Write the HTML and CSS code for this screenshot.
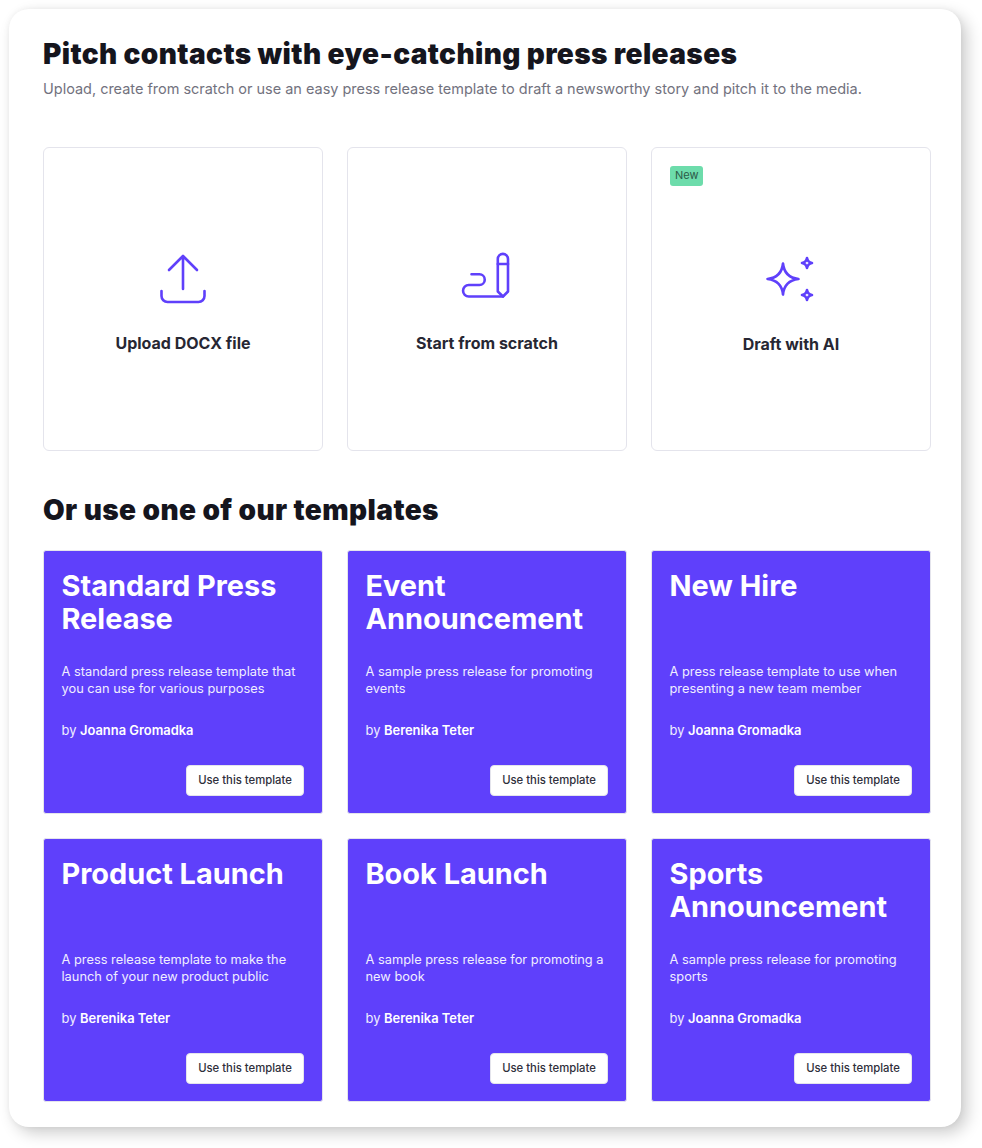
FILE: index.html
```html
<!DOCTYPE html>
<html lang="en">
<head>
<meta charset="utf-8">
<title>Press releases</title>
<link rel="stylesheet" href="styles.css">
</head>
<body>
<main class="panel">
  <header class="head">
    <h1 class="title">Pitch contacts with eye-catching press releases</h1>
    <p class="sub">Upload, create from scratch or use an easy press release template to draft a newsworthy story and pitch it to the media.</p>
  </header>
  <section class="grid starts">
    <a class="start">
      <svg class="icon" width="48" height="50" viewBox="0 0 48 50" fill="none" stroke="#5f40fb" stroke-width="2.6" stroke-linecap="round" stroke-linejoin="round"><path d="M24 2V35M10 16 24 2 38 16"/><path d="M2.500 37V42A6 6 0 0 0 8.500 48H39.500A6 6 0 0 0 45.500 42V37"/></svg>
      <span class="start-label">Upload DOCX file</span>
    </a>
    <a class="start">
      <svg class="icon" width="50" height="50" viewBox="0 0 50 50" fill="none" stroke="#5f40fb" stroke-width="2.6" stroke-linecap="round" stroke-linejoin="round"><path d="M35.800 5A5.100 5.100 0 0 1 46 5V37.500L41 42.500 35.800 37.500Z"/><path d="M35.800 10H46"/><path d="M41 42.500H6.800A5.750 5.750 0 0 1 6.800 31H17.400A5.350 5.350 0 0 0 17.400 20.300H9.500"/></svg>
      <span class="start-label">Start from scratch</span>
    </a>
    <a class="start">
      <span class="badge">New</span>
      <svg class="icon" width="50" height="51" viewBox="0 0 50 51" fill="none" stroke="#5f40fb" stroke-width="2.6" stroke-linejoin="round" stroke-linecap="round"><path d="M17 9.500C18 19 23 24 32.500 25 23 26 18 31 17 40.500 16 31 11 26 1.500 25 11 24 16 19 17 9.500Z"/><path d="M41 4C41.500 7 43 8.500 46 9 43 9.500 41.500 11 41 14 40.500 11 39 9.500 36 9 39 8.500 40.500 7 41 4Z"/><path d="M41 36C41.500 39 43 40.500 46 41 43 41.500 41.500 43 41 46 40.500 43 39 41.500 36 41 39 40.500 40.500 39 41 36Z"/></svg>
      <span class="start-label">Draft with AI</span>
    </a>
  </section>
  <h2 class="section-title">Or use one of our templates</h2>
  <section class="grid templates">
    <article class="tpl">
      <h3 class="tpl-title">Standard Press Release</h3>
      <p class="tpl-desc">A standard press release template that you can use for various purposes</p>
      <p class="tpl-by">by <b>Joanna Gromadka</b></p>
      <button class="tpl-btn">Use this template</button>
    </article>
    <article class="tpl">
      <h3 class="tpl-title">Event Announcement</h3>
      <p class="tpl-desc">A sample press release for promoting events</p>
      <p class="tpl-by">by <b>Berenika Teter</b></p>
      <button class="tpl-btn">Use this template</button>
    </article>
    <article class="tpl">
      <h3 class="tpl-title">New Hire</h3>
      <p class="tpl-desc">A press release template to use when presenting a new team member</p>
      <p class="tpl-by">by <b>Joanna Gromadka</b></p>
      <button class="tpl-btn">Use this template</button>
    </article>
    <article class="tpl">
      <h3 class="tpl-title">Product Launch</h3>
      <p class="tpl-desc">A press release template to make the launch of your new product public</p>
      <p class="tpl-by">by <b>Berenika Teter</b></p>
      <button class="tpl-btn">Use this template</button>
    </article>
    <article class="tpl">
      <h3 class="tpl-title">Book Launch</h3>
      <p class="tpl-desc">A sample press release for promoting a new book</p>
      <p class="tpl-by">by <b>Berenika Teter</b></p>
      <button class="tpl-btn">Use this template</button>
    </article>
    <article class="tpl">
      <h3 class="tpl-title">Sports Announcement</h3>
      <p class="tpl-desc">A sample press release for promoting sports</p>
      <p class="tpl-by">by <b>Joanna Gromadka</b></p>
      <button class="tpl-btn">Use this template</button>
    </article>
  </section>
</main>
</body>
</html>
```
FILE: styles.css
```css
* { box-sizing: border-box; }
html, body { margin: 0; padding: 0; background: #fff; }
body {
  width: 982px;
  height: 1148px;
  overflow: hidden;
  padding: 9px 0 0 9px;
  font-family: Inter, "Liberation Sans", sans-serif;
  color: #17171f;
}
.panel {
  width: 952px;
  height: 1118px;
  background: #fff;
  border-radius: 20px;
  padding: 27px 30px 0 34px;
  box-shadow: 6px 6px 16px rgba(0, 0, 0, 0.2), 0 0 6px rgba(0, 0, 0, 0.05);
}
.head { height: 111px; }
.title {
  margin: 0;
  font-size: 28px;
  line-height: 36px;
  font-weight: 900;
  letter-spacing: 0.39px;
  color: #15151d;
}
.sub {
  margin: 7px 0 0;
  font-size: 14.5px;
  line-height: 20px;
  letter-spacing: -0.017px;
  color: #72727e;
}
.grid {
  display: grid;
  grid-template-columns: repeat(3, 280px);
  gap: 24px;
}
.start {
  position: relative;
  height: 304px;
  border: 1px solid #e4e4ec;
  border-radius: 6px;
  display: flex;
  flex-direction: column;
  align-items: center;
  padding-top: 106px;
}
.icon { display: block; flex: none; overflow: visible; }
.start-label {
  margin-top: 28px;
  font-size: 16px;
  line-height: 22px;
  font-weight: 650;
  color: #272733;
}
.badge {
  position: absolute;
  left: 18px;
  top: 18px;
  padding: 0 4.5px 0 5px;
  height: 20px;
  border-radius: 3px;
  background: #6ddcab;
  font-size: 11px;
  line-height: 19px;
  color: #2c5a48;
}
.section-title {
  margin: 41px 0 22px;
  font-size: 28px;
  line-height: 36px;
  font-weight: 900;
  letter-spacing: 0.41px;
  color: #15151d;
}
.tpl {
  height: 264px;
  background: #5f40fb;
  border: 1px solid #e4e4ec;
  border-radius: 3px;
  padding: 18px 18px 17px 17.5px;
  color: #fff;
  display: flex;
  flex-direction: column;
}
.tpl-title {
  margin: 0;
  height: 66px;
  font-size: 28.9px;
  line-height: 33px;
  font-weight: 700;
}
.tpl-desc {
  margin: 28px 0 0;
  height: 34px;
  font-size: 12.8px;
  line-height: 17px;
  letter-spacing: 0.02px;
  color: #f0eeff;
}
.tpl-by {
  margin: 25px 0 0;
  font-size: 12.9px;
  line-height: 17px;
  color: #f0eeff;
}
.tpl-by b { font-weight: 600; color: #fff; }
.tpl-btn {
  margin-top: auto;
  align-self: flex-end;
  width: 118px;
  height: 31px;
  padding: 0 0 2px;
  border: 1px solid #e4e4ec;
  border-radius: 4px;
  background: #fff;
  font-family: inherit;
  font-size: 11.3px;
  font-weight: 500;
  color: #2f2f3b;
}
```
